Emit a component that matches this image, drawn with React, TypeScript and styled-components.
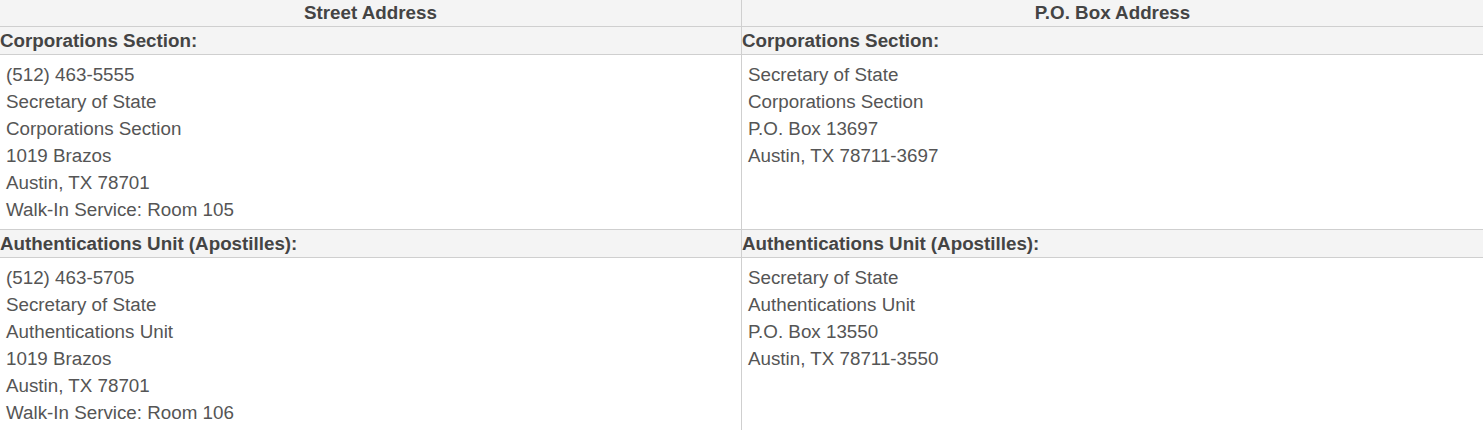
import React from "react";
import styled, { createGlobalStyle } from "styled-components";

const Global = createGlobalStyle`
  html, body { margin: 0; padding: 0; background: #fff; }
  body { font-family: "Liberation Sans", Arial, sans-serif; }
`;

const Table = styled.div`
  display: grid;
  grid-template-columns: 742px 1fr;
  width: 1483px;
  font-family: "Liberation Sans", Arial, sans-serif;
  font-size: 18.8px;
  color: #555;
`;

const Cell = styled.div<{ $left?: boolean }>`
  border-bottom: 1px solid #cfcfcf;
  border-right: ${(p) => (p.$left ? "1px solid #cfcfcf" : "none")};
`;

const HeadCell = styled(Cell)`
  background: #f4f4f4;
  font-weight: bold;
  color: #444;
  text-align: center;
  height: 26px;
  line-height: 25px;
`;

const SectionCell = styled(Cell)`
  background: #f4f4f4;
  font-weight: bold;
  color: #444;
  height: 27px;
  line-height: 27px;
  white-space: nowrap;
`;

const BodyCell = styled(Cell)`
  padding: 6px 6px 6px 6px;
  line-height: 27px;
`;

const Line = styled.div`
  white-space: nowrap;
`;

const sections = [
  {
    title: "Corporations Section:",
    street: [
      "(512) 463-5555",
      "Secretary of State",
      "Corporations Section",
      "1019 Brazos",
      "Austin, TX 78701",
      "Walk-In Service: Room 105",
    ],
    box: [
      "Secretary of State",
      "Corporations Section",
      "P.O. Box 13697",
      "Austin, TX 78711-3697",
    ],
  },
  {
    title: "Authentications Unit (Apostilles):",
    street: [
      "(512) 463-5705",
      "Secretary of State",
      "Authentications Unit",
      "1019 Brazos",
      "Austin, TX 78701",
      "Walk-In Service: Room 106",
    ],
    box: [
      "Secretary of State",
      "Authentications Unit",
      "P.O. Box 13550",
      "Austin, TX 78711-3550",
    ],
  },
];

export default function App() {
  return (
    <>
      <Global />
      <Table>
        <HeadCell $left>Street Address</HeadCell>
        <HeadCell>P.O. Box Address</HeadCell>
        {sections.map((s) => (
          <React.Fragment key={s.title}>
            <SectionCell $left>{s.title}</SectionCell>
            <SectionCell>{s.title}</SectionCell>
            <BodyCell $left>
              {s.street.map((l) => (
                <Line key={l}>{l}</Line>
              ))}
            </BodyCell>
            <BodyCell>
              {s.box.map((l) => (
                <Line key={l}>{l}</Line>
              ))}
            </BodyCell>
          </React.Fragment>
        ))}
      </Table>
    </>
  );
}
